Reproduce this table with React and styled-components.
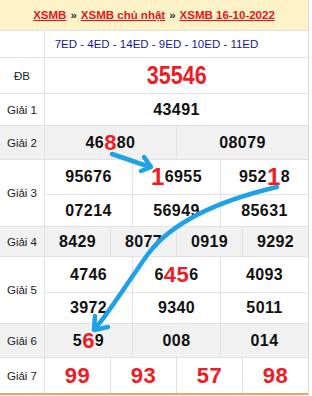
import React from "react";
import styled, { createGlobalStyle } from "styled-components";

const GlobalStyle = createGlobalStyle`
  body {
    margin: 0;
    background: #fff;
    font-family: "Liberation Sans", Arial, sans-serif;
  }
`;

const LINE = "#e2e2e2";
const SHADE = "#f1f1f1";

const Board = styled.div`
  position: relative;
  width: 309px;
  border-right: 1px solid #dcdcdc;
  border-bottom: 2px solid #f3a35c;
  box-sizing: border-box;
`;

const Title = styled.div`
  height: 30px;
  background: #fdf2c8;
  display: flex;
  align-items: center;
  justify-content: center;
  font-size: 11.5px;
  font-weight: bold;
`;

const TitleLink = styled.a`
  color: #e5161c;
  text-decoration: underline;
`;

const Sep = styled.span`
  color: #333;
  margin: 0 4px;
`;

const Row = styled.div`
  display: flex;
  border-top: 1px solid ${LINE};
  background: ${(p) => (p.$shade ? SHADE : "#fff")};
`;

const Label = styled.div`
  width: 44px;
  flex: none;
  border-right: 1px solid ${LINE};
  display: flex;
  align-items: center;
  justify-content: center;
  font-size: 11.5px;
  color: #222;
`;

const Codes = styled.div`
  flex: 1;
  height: 26px;
  display: flex;
  align-items: center;
  justify-content: center;
  padding-right: 40px;
  font-size: 11.5px;
  color: #161699;
`;

const Cells = styled.div`
  flex: 1;
  display: grid;
  grid-template-columns: repeat(${(p) => p.$cols}, 1fr);
  grid-template-rows: ${(p) => p.$rows.map((h) => `${h}px`).join(" ")};
  gap: 1px;
  background: ${LINE};
`;

const Cell = styled.div`
  display: flex;
  align-items: center;
  justify-content: center;
  background: ${(p) => (p.$shade ? SHADE : "#fff")};
  font-size: ${(p) => p.$size || 16}px;
  font-weight: bold;
  letter-spacing: 0.4px;
  color: ${(p) => (p.$red ? "#ee1c24" : "#111")};
`;

const Special = styled.span`
  display: inline-block;
  font-size: 25px;
  transform: scaleX(0.86);
  letter-spacing: 0;
`;

const Hit = styled.span`
  color: #ee1c24;
  font-size: ${(p) => p.$size || 22}px;
`;

const Arrows = styled.svg`
  position: absolute;
  left: 0;
  top: 0;
  pointer-events: none;
`;

const prizes = [
  { label: "ĐB", rows: [35], cols: 1, special: true, nums: ["35546"] },
  { label: "Giải 1", rows: [31], cols: 1, nums: ["43491"] },
  { label: "Giải 2", rows: [33], cols: 2, shade: true, nums: [["46", "8", "80"], "08079"] },
  {
    label: "Giải 3",
    rows: [34, 31],
    cols: 3,
    nums: ["95676", ["", "1", "6955", 24], ["952", "1", "8", 24], "07214", "56949", "85631"],
  },
  { label: "Giải 4", rows: [29], cols: 4, shade: true, nums: ["8429", "8077", "0919", "9292"] },
  {
    label: "Giải 5",
    rows: [35, 30],
    cols: 3,
    nums: ["4746", ["6", "45", "6"], "4093", "3972", "9340", "5011"],
  },
  { label: "Giải 6", rows: [33], cols: 3, shade: true, nums: [["5", "6", "9"], "008", "014"] },
  { label: "Giải 7", rows: [35], cols: 4, red: true, size: 22, nums: ["99", "93", "57", "98"] },
];

const Number = ({ value }) => {
  if (!Array.isArray(value)) return value;
  const [before, hit, after, size] = value;
  return (
    <>
      {before}
      <Hit $size={size}>{hit}</Hit>
      {after}
    </>
  );
};

export default function App() {
  return (
    <>
      <GlobalStyle />
      <Board>
        <Title>
          <TitleLink>XSMB</TitleLink>
          <Sep>»</Sep>
          <TitleLink>XSMB chủ nhật</TitleLink>
          <Sep>»</Sep>
          <TitleLink>XSMB 16-10-2022</TitleLink>
        </Title>

        <Row>
          <Label />
          <Codes>7ED - 4ED - 14ED - 9ED - 10ED - 11ED</Codes>
        </Row>

        {prizes.map((p) => (
          <Row key={p.label} $shade={p.shade}>
            <Label>{p.label}</Label>
            <Cells $cols={p.cols} $rows={p.rows}>
              {p.nums.map((n, i) => (
                <Cell key={i} $shade={p.shade} $red={p.red || p.special} $size={p.size}>
                  {p.special ? <Special>{n}</Special> : <Number value={n} />}
                </Cell>
              ))}
            </Cells>
          </Row>
        ))}

        <Arrows width="309" height="396" viewBox="0 0 309 396">
          <g fill="none" stroke="#1ea1e6" strokeWidth="4.5" strokeLinecap="round" strokeLinejoin="round">
            <path d="M112 154 L150 167" />
            <path d="M144 157 L151 167 L141 171" />
            <path d="M277 187 C230 198 175 218 148 254 C128 282 112 308 95 329" />
            <path d="M95 316 L94 330 L108 327" />
          </g>
        </Arrows>
      </Board>
    </>
  );
}
